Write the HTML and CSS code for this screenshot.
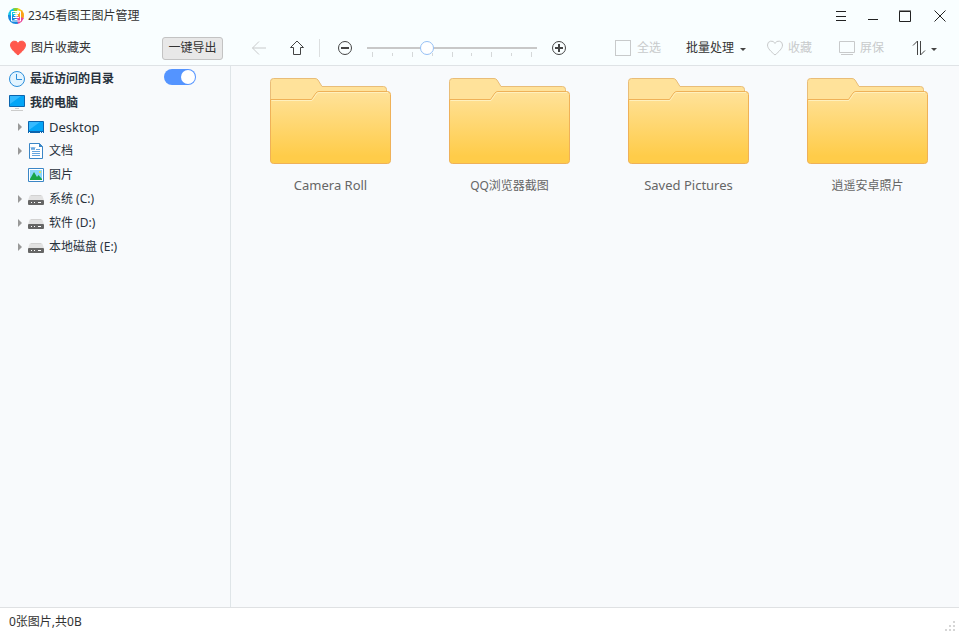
FILE: index.html
```html
<!DOCTYPE html>
<html lang="zh-CN">

<head>
  <meta charset="utf-8">
  <meta name="viewport" content="width=device-width">
  <title>2345看图王图片管理</title>
  <link rel="stylesheet" href="styles.css">
</head>

<body>
  <!-- shared icons -->
  <svg class="defs" width="0" height="0" aria-hidden="true">
    <defs>
      <linearGradient id="folderFill" x1="0" y1="0" x2="0" y2="1">
        <stop offset="0" stop-color="#ffe29a"/>
        <stop offset="0.9" stop-color="#ffcc49"/>
      </linearGradient>
      <symbol id="folder" viewBox="0 0 121 88">
        <path d="M.5 84V4.500Q.5 1.500 3.500 1.500H45Q47 1.500 48 3L52 9.500H113.500Q116.500 9.500 116.500 12.500V30H.5z" fill="#ffe29a" stroke="#e9bd78"/>
        <path d="M.5 22.500H41.500L46 16Q47 14.500 49 14.500H117.500Q120.500 14.500 120.500 17.500V83.500Q120.500 86.500 117.500 86.500H3.500Q.5 86.500 .5 83.500z" fill="url(#folderFill)" stroke="#efb158"/>
        <path d="M1.500 23.500H42L46.500 17Q47.500 15.500 49 15.500H118" fill="none" stroke="#fff0bd"/>
      </symbol>
      <symbol id="drive" viewBox="0 0 16 16">
        <path d="M3 4h10q1 0 1.500 1L16 9.500H0L1.500 5Q2 4 3 4z" fill="#e2e2e2"/>
        <path d="M3 4.500h10" stroke="#d2d2d2"/>
        <rect y="9" width="16" height="5" rx="1" fill="#666"/>
        <path d="M3 11.500h1M6 11.500h1M10 11.500h3" stroke="#fff"/>
      </symbol>
      <symbol id="heart" viewBox="0 0 18 18">
        <path d="M9 16C5 12.500 1.500 9.500 1.500 6A3.900 3.900 0 0 1 9 4.500 3.900 3.900 0 0 1 16.500 6C16.500 9.500 13 12.500 9 16z"/>
      </symbol>
    </defs>
  </svg>

  <header>
    <div class="titlebar">
      <svg class="logo" width="16" height="16" viewBox="0 0 16 16">
        <clipPath id="disc"><circle cx="8" cy="8" r="8"/></clipPath>
        <g clip-path="url(#disc)">
          <path d="M0 0h8v8H0z" fill="#12c6e8"/>
          <path d="M8 0h8v8z" fill="#ffcd13"/>
          <path d="M5 0h5L8 8z" fill="#8ace2a"/>
          <path d="M16 0v11L8 8z" fill="#f9a21a"/>
          <path d="M16 10v6H9L8 8z" fill="#e9479a"/>
          <path d="M0 7l8 1 2 8H0z" fill="#1688df"/>
        </g>
        <path d="M3.500 3.500h9v9.500h-9zM5 5.500h6M6 7.500h4M5 9.500h6M8 4v5M6.500 11.500h3" fill="none" stroke="#fff"/>
      </svg>
      <h1>2345看图王图片管理</h1>
      <div class="window-buttons">
        <button aria-label="菜单"><svg width="12" height="12" viewBox="0 0 12 12"><path d="M1 1.500h10M1 6.500h10M1 10.500h10"/></svg></button>
        <button aria-label="最小化"><svg width="12" height="12" viewBox="0 0 12 12"><path d="M1 9.500h10"/></svg></button>
        <button aria-label="最大化"><svg width="12" height="12" viewBox="0 0 12 12"><path d="M.5 1.500h11v10H.5zM0 1h12"/></svg></button>
        <button class="close" aria-label="关闭"><svg width="12" height="12" viewBox="0 0 12 12"><path d="M.5.500l11 11M11.500.500l-11 11"/></svg></button>
      </div>
    </div>

    <div class="toolbar">
      <div class="favorites">
        <svg class="red-heart" width="18" height="18"><use href="#heart"/></svg>
        <a href="#favorites">图片收藏夹</a>
        <button class="export">一键导出</button>
      </div>
      <div class="navigate">
        <button class="icon-button disabled" aria-label="后退" disabled><svg width="16" height="16" viewBox="0 0 16 16"><path d="M15 8H1.500M8 1.500L1.500 8 8 14.500"/></svg></button>
        <button class="icon-button" aria-label="向上"><svg width="16" height="16" viewBox="0 0 16 16"><path d="M8 1L1.500 7.500h3v7h7v-7h3z"/></svg></button>
      </div>
      <div class="zoom">
        <button class="icon-button" aria-label="缩小"><svg width="16" height="16" viewBox="0 0 16 16"><circle cx="8" cy="8" r="6.500"/><path d="M4 8h8" stroke-width="2"/></svg></button>
        <div class="slider">
          <input type="range" min="0" max="100" value="34" aria-label="缩放">
          <div class="ticks"><i></i><i></i><i></i><i></i><i></i><i></i><i></i><i></i><i></i></div>
        </div>
        <button class="icon-button" aria-label="放大"><svg width="16" height="16" viewBox="0 0 16 16"><circle cx="8" cy="8" r="6.500"/><path d="M4 8h8M8 4v8" stroke-width="2"/></svg></button>
      </div>
      <div class="actions">
        <label class="select-all"><input type="checkbox" disabled>全选</label>
        <button class="action batch">批量处理<span class="caret"></span></button>
        <button class="action disabled" disabled><svg width="18" height="18"><use href="#heart"/></svg>收藏</button>
        <button class="action disabled" disabled><svg width="18" height="18" viewBox="0 0 18 18"><path d="M1.500 2.500h15v11h-15zM3 15.500h12"/></svg>屏保</button>
        <button class="action sort" aria-label="排序"><svg width="14" height="16" viewBox="0 0 14 16"><path d="M1 5.500L5.500 1v14M8.500 1v14L13 10.500"/></svg><span class="caret"></span></button>
      </div>
    </div>
  </header>

  <main>
    <nav>
      <div class="row root">
        <svg width="18" height="18" viewBox="0 0 18 18"><circle cx="9" cy="9" r="7.500" fill="#e3f4ff" stroke="#2d8fdb"/><path d="M8.500 4v5.500H14" fill="none" stroke="#2d8fdb"/></svg>
        <label for="recent">最近访问的目录</label>
        <input type="checkbox" id="recent" class="switch" checked>
      </div>
      <div class="row root">
        <svg width="18" height="18" viewBox="0 0 18 18"><path d="M1.500 1.500h15v11h-15z" fill="#03a5f7" stroke="#0b64ae"/><path d="M2 2h11L2 10z" fill="#35baff"/><path d="M7 14.500h4M3 16.500h12" stroke="#ccc"/></svg>
        <a href="#computer">我的电脑</a>
      </div>
      <div class="row">
        <span class="arrow"></span>
        <svg width="16" height="16" viewBox="0 0 16 16"><path d="M.5 2.500h15v11H.5z" fill="#03a5f7" stroke="#0b64ae"/><path d="M1 3h11L1 11z" fill="#35baff"/><path d="M0 13h16" stroke="#0b64ae" stroke-width="2"/><path d="M1 13.500h1M12 13.500h1M14 13.500h1" stroke="#fff"/></svg>
        <a href="#desktop" class="latin">Desktop</a>
      </div>
      <div class="row">
        <span class="arrow"></span>
        <svg width="16" height="16" viewBox="0 0 16 16"><path d="M1.500.500h10l3 3v12h-13z" fill="#fff" stroke="#3b86c6"/><path d="M11 0v4h4z" fill="#3b86c6"/><path d="M3 4l1 3 1-3 1 3 1-3M8 6.500h4M4 8.500h8M4 10.500h8M4 12.500h8" fill="none" stroke="#65a5de"/></svg>
        <a href="#documents">文档</a>
      </div>
      <div class="row">
        <span class="arrow hidden"></span>
        <svg width="16" height="16" viewBox="0 0 16 16"><path d="M.5 1.500h15v13H.5z" fill="#fff" stroke="#3b86c6"/><path d="M2 3h12v10H2z" fill="#8bd7fb"/><path d="M2 12l4-7 3 5 1.500-2 3.500 4v1H2z" fill="#1aa548"/><circle cx="12" cy="5" r="1" fill="#f5e532"/></svg>
        <a href="#pictures">图片</a>
      </div>
      <div class="row">
        <span class="arrow"></span>
        <svg width="16" height="16"><use href="#drive"/></svg>
        <a href="#c">系统 (C:)</a>
      </div>
      <div class="row">
        <span class="arrow"></span>
        <svg width="16" height="16"><use href="#drive"/></svg>
        <a href="#d">软件 (D:)</a>
      </div>
      <div class="row">
        <span class="arrow"></span>
        <svg width="16" height="16"><use href="#drive"/></svg>
        <a href="#e">本地磁盘 (E:)</a>
      </div>
    </nav>

    <section class="folders">
      <a href="#camera-roll" class="folder latin"><svg width="121" height="88"><use href="#folder"/></svg>Camera Roll</a>
      <a href="#qq" class="folder"><svg width="121" height="88"><use href="#folder"/></svg>QQ浏览器截图</a>
      <a href="#saved" class="folder latin"><svg width="121" height="88"><use href="#folder"/></svg>Saved Pictures</a>
      <a href="#xiaoyao" class="folder"><svg width="121" height="88"><use href="#folder"/></svg>逍遥安卓照片</a>
    </section>
  </main>

  <footer>
    <span>0张图片,共0B</span>
    <svg width="10" height="10" viewBox="0 0 10 10"><path d="M8 0h2v2H8zM4 4h2v2H4zM8 4h2v2H8zM0 8h2v2H0zM4 8h2v2H4zM8 8h2v2H8z" fill="#d6d6d6"/></svg>
  </footer>
</body>

</html>
```
FILE: styles.css
```css
* {
  box-sizing: border-box;
}

body {
  display: flex;
  flex-direction: column;
  min-height: 100vh;
  margin: 0;
  background-color: #f8fafc;
  color: #333;
  font-family: "Noto Sans", "Noto Sans CJK SC", sans-serif;
  font-size: 12px;
  line-height: 18px;
}

svg {
  display: block;
  flex-shrink: 0;
}

.defs {
  position: absolute;
}

a {
  color: inherit;
  text-decoration: none;
}

button {
  margin: 0;
  padding: 0;
  border: none;
  background: none;
  color: inherit;
  font: inherit;
  white-space: nowrap;
}

header {
  background-color: #f9feff;
  border-bottom: 1px solid #dfe3e6;
}

/* title bar */
.titlebar {
  display: flex;
  align-items: center;
  height: 31px;
  padding-left: 8px;
}

h1 {
  margin: 0 0 0 4px;
  padding-top: 1px;
  font-size: 12px;
  font-weight: normal;
}

.window-buttons {
  display: flex;
  margin-left: auto;
}

.window-buttons button {
  display: flex;
  align-items: center;
  justify-content: center;
  width: 32px;
  height: 31px;
}

.window-buttons .close {
  width: 38px;
}

.window-buttons svg {
  fill: none;
  stroke: #222;
}

/* toolbar */
.toolbar {
  display: flex;
  align-items: center;
  height: 34px;
}

.favorites {
  display: flex;
  align-items: center;
  width: 230px;
  padding: 0 7px 0 9px;
}

.favorites a {
  margin-left: 4px;
}

.red-heart {
  fill: #ff584d;
  stroke: #ff584d;
}

.export {
  width: 61px;
  height: 23px;
  margin-left: auto;
  border: 1px solid #c3c3c3;
  border-radius: 3px;
  background-color: #e8e8e8;
}

.icon-button svg,
.action svg {
  fill: none;
  stroke: #444;
}

.navigate {
  display: flex;
  gap: 22px;
  padding: 0 14px 0 21px;
}

.zoom {
  display: flex;
  align-items: center;
  gap: 14px;
  padding-left: 17px;
  border-left: 1px solid #dcdfe0;
}

.slider {
  width: 170px;
  height: 18px;
}

.slider input {
  display: block;
  width: 100%;
  height: 16px;
  margin: 1px 0 0;
  appearance: none;
  background: linear-gradient(#c8c8c8, #c8c8c8) center / 100% 2px no-repeat;
}

.slider input::-webkit-slider-thumb {
  appearance: none;
  width: 14px;
  height: 14px;
  border: 1px solid #95c0f5;
  border-radius: 50%;
  background-color: #fff;
}

.ticks {
  display: flex;
  justify-content: space-between;
  padding: 0 5px;
  margin-top: -4px;
}

.ticks i {
  width: 1px;
  height: 5px;
  background-color: #d5d8d9;
}

.ticks i:nth-child(even) {
  height: 3px;
  margin-top: 1px;
}

.actions {
  display: flex;
  align-items: center;
  margin-left: auto;
  padding-right: 22px;
}

.select-all {
  display: flex;
  align-items: center;
  gap: 6px;
  margin-right: 25px;
  color: #c8cacb;
}

.select-all input {
  width: 16px;
  height: 16px;
  margin: 0;
  appearance: none;
  border: 1px solid #c8cacb;
}

.action {
  display: flex;
  align-items: center;
  gap: 4px;
  margin-right: 26px;
}

.action.batch {
  margin-right: 20px;
}

.action.disabled {
  color: #c8cacb;
}

.action.disabled svg,
.icon-button.disabled svg {
  stroke: #c8cacb;
}

.action.sort {
  gap: 5px;
  margin: 0 0 0 2px;
}

.caret {
  margin: 2px 0 0 2px;
  border: 3px solid transparent;
  border-top-color: #444;
  border-bottom: none;
}

.sort .caret {
  margin-left: 0;
}

/* content */
main {
  display: flex;
  flex-grow: 1;
}

nav {
  flex-shrink: 0;
  width: 231px;
  padding-top: 1px;
  border-right: 1px solid #dfe5e8;
}

.row {
  display: flex;
  align-items: center;
  gap: 5px;
  height: 24px;
  padding-left: 18px;
  color: #28323c;
}

.root {
  gap: 4px;
  padding-left: 8px;
  font-weight: bold;
}

.latin {
  font-size: 13px;
}

.arrow {
  border: 4px solid transparent;
  border-left: 5px solid #999;
  border-right: none;
}

.arrow {
  margin-right: 1px;
  border-left-width: 4px;
}

.hidden {
  visibility: hidden;
}

.switch {
  display: flex;
  justify-content: flex-end;
  width: 32px;
  height: 16px;
  margin: 0 34px 4px auto;
  padding: 1px;
  appearance: none;
  border-radius: 8px;
  background-color: #5494ff;
}

.switch::before {
  content: "";
  width: 14px;
  height: 14px;
  border-radius: 50%;
  background-color: #fff;
}

.switch:not(:checked) {
  justify-content: flex-start;
  background-color: #c8c8c8;
}

.folders {
  display: flex;
  flex-wrap: wrap;
  align-content: flex-start;
  flex-grow: 1;
  padding: 11px 0 0 10px;
}

.folder {
  display: flex;
  flex-direction: column;
  align-items: center;
  gap: 12px;
  width: 179px;
  color: #666;
}

.folder.latin {
  gap: 11px;
}

footer {
  display: flex;
  align-items: center;
  justify-content: space-between;
  height: 28px;
  padding: 1px 4px 0 9px;
  border-top: 1px solid #dfe1e3;
  background-color: #fff;
}

footer svg {
  align-self: flex-end;
  margin-bottom: 4px;
}
```
